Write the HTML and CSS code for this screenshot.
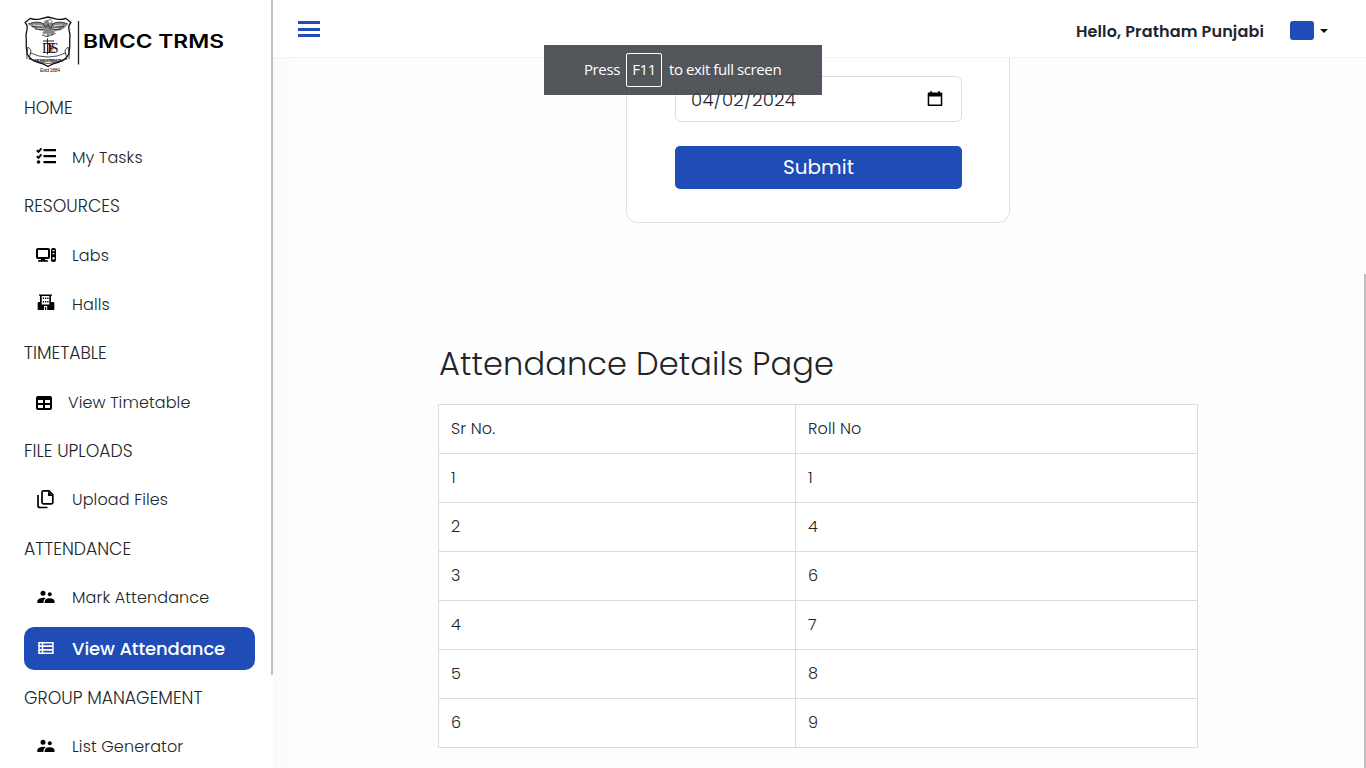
FILE: index.html
```html
<!DOCTYPE html>
<html lang="en">
<head>
<meta charset="utf-8">
<title>BMCC TRMS</title>
<link rel="stylesheet" href="styles.css">
</head>
<body>
<div class="app">
  <aside class="sidebar">
    <svg class="brand" width="204" height="64" viewBox="20 12 204 64">
      <path fill="none" stroke="#111" stroke-width="1.300" stroke-linejoin="round" d="M25 22.500l5.500-4.200q5 2 10 .5l7.500-1.800 7.500 1.800q6 1.500 10-.5l5.500 4.200q-3 3-2 7 1.500 5 .7 11 .6 7-1 13.500-2.500 5.500-9.500 8-7 1.500-11.200 4.500-4.200-3-11.200-4.500-7-2.500-9.500-8-1.600-6.500-1-13.500-.8-6 .7-11 1-4-2-7z"/>
      <path fill="none" stroke="#222" stroke-width=".8" d="M27 59q-1-7 1-12l3 3-.5 4M69 59q1-7-1-12l-3 3 .5 4M30.500 53q8 4 17.500 4t17.500-4l1.500 6q-9 4-19 4.500-10-.5-19-4.500z"/>
      <path fill="#888" d="M28 24q9-3.500 15-.5l2-3q3-1.500 6 0l2 3q7-3 15 .5-4 6-11 7l-3 .5 2 2.500-4 1.500-2-2-2.500 4-1-4-3 1-1-2.500 2-1q-9 0-16.500-7z"/>
      <path fill="none" stroke="#222" stroke-width=".8" d="M28 24q9-3.500 15-.5l3 4 2-3 2.500 5M68 24q-8-3.500-15-.5l-2 5M32 26.500l10 1M35 29l8 .5M64 26.500l-9 1M61 29l-7 .5M42 35l5 1.500 6-2"/>
      <path fill="none" stroke="#eee" stroke-width=".8" d="M33 25l9 .8M37 28l6 .5M62 25l-8 .8M59 28l-5 .5"/>
      <circle cx="50" cy="21.500" r="2" fill="#fff" stroke="#444" stroke-width=".6"/>
      <path fill="none" stroke="#222" stroke-width="1" d="M47.500 38.500v16M43 41h11"/>
      <text class="monogram" x="42" y="53">DES</text>
      <text class="motto" x="33" y="61.500" textLength="30">UNION IS STRENGTH</text>
      <text class="founded" x="40" y="71.500" textLength="20">Estd 1884</text>
      <path stroke="#222" stroke-width="1.300" d="M78.500 21v43.500"/>
      <text class="wordmark" x="83" y="48.200" textLength="141" lengthAdjust="spacingAndGlyphs">BMCC TRMS</text>
    </svg>
    <nav class="menu">
      <div class="group high"><span>HOME</span></div>
      <a class="item"><svg class="up2" width="20" height="18" viewBox="0 0 20 18"><path d="M.8 3.200l1.700 1.600L5.500 1.300M.8 9.200l1.700 1.600L5.500 7.300" fill="none" stroke="#000" stroke-width="1.900"/><circle cx="2.500" cy="15" r="1.800"/><path d="M7.500 2h12.500v2.200H7.500zM7.500 8h12.500v2.200H7.500zM7.500 14h12.500v2.200H7.500z"/></svg><span>My Tasks</span></a>
      <div class="group high"><span>RESOURCES</span></div>
      <a class="item"><svg class="up1" width="20" height="16" viewBox="0 0 20 16"><path fill-rule="evenodd" d="M2 1h10q2 0 2 2v7q0 2-2 2H9v1h2q1 0 1 1.800H2Q2 13 3 13h2v-1H2q-2 0-2-2V3q0-2 2-2zm0 2v7h10V3zM17 1h1q2 0 2 2v10q0 2-2 2h-1q-2 0-2-2V3q0-2 2-2zm-.5 2v1.200h2V3zm0 3v1.200h2V6zm1 4a1.300 1.300 0 1 0 .1 0z"/></svg><span>Labs</span></a>
      <a class="item"><svg class="up3" width="20" height="18" viewBox="0 0 20 18"><path fill-rule="evenodd" d="M3 1.500h13v1.300h-1V9H17q1.300 0 1.300 1v7H1.700v-7q0-1 1.300-1h1V2.800H3zM5.700 3v8.500h7.600V3zM8 17h1v-3h1.200v3h1V13H8z"/><path d="M6.800 4.500h1.300V6H6.800zM9 4.500h1.300V6H9zM11.200 4.500h1.300V6h-1.300zM6.800 8h1.300v1.500H6.800zM9 8h1.300v1.500H9zM11.200 8h1.300v1.500h-1.300z"/></svg><span>Halls</span></a>
      <div class="group high"><span>TIMETABLE</span></div>
      <a class="item"><svg width="16" height="16" viewBox="0 0 16 16"><path fill-rule="evenodd" d="M2 1h12q2 0 2 2v10q0 2-2 2H2q-2 0-2-2V3q0-2 2-2zm0 4v3h5V5zm7 0v3h5V5zm-7 5v3h5v-3zm7 0v3h5v-3z"/></svg><span>View Timetable</span></a>
      <div class="group short"><span>FILE UPLOADS</span></div>
      <a class="item"><svg class="up1" width="20" height="20" viewBox="0 0 20 20"><path d="M7.500 1.800H13l3.800 3.800v8q0 1.300-1.300 1.300h-8q-1.500 0-1.500-1.300V3.200q0-1.400 1.500-1.400zM2 6v10.500q0 2 2 2h7.500" fill="none" stroke="#000" stroke-width="1.700"/><path d="M12 2l5 5h-5z"/></svg><span>Upload Files</span></a>
      <div class="group"><span>ATTENDANCE</span></div>
      <a class="item"><svg class="up1" width="20" height="14" viewBox="0 0 20 14"><circle cx="7" cy="3.200" r="2.500"/><circle cx="13.800" cy="4.200" r="2"/><path d="M1.300 13v-2Q2 8 7.500 7.800q1.300 0 2.300.3Q7 10 7.200 13zM8.500 13q-.2-4.500 5-4.700 4.800.2 5 3V13z"/></svg><span>Mark Attendance</span></a>
      <a class="item active"><svg class="up1" width="20" height="14" viewBox="0 0 20 14"><path fill="#fff" fill-rule="evenodd" d="M2.200 1h15.500v12H2.200zm1.600 1.500v1.800h2V2.500zm3.500 0v1.800h8.900V2.500zM3.800 6v2h2V6zm3.500 0v2h8.900V6zM3.800 9.700v1.800h2V9.700zm3.500 0v1.800h8.900V9.700z"/></svg><span>View Attendance</span></a>
      <div class="group short"><span>GROUP MANAGEMENT</span></div>
      <a class="item"><svg class="up1" width="20" height="14" viewBox="0 0 20 14"><circle cx="7" cy="3.200" r="2.500"/><circle cx="13.800" cy="4.200" r="2"/><path d="M1.300 13v-2Q2 8 7.500 7.800q1.300 0 2.300.3Q7 10 7.200 13zM8.500 13q-.2-4.500 5-4.700 4.800.2 5 3V13z"/></svg><span>List Generator</span></a>
    </nav>
    <div class="side-scroll"></div>
  </aside>
  <div class="page">
    <header class="topbar">
      <div class="burger"><i></i><i></i><i></i></div>
      <div class="user"><span class="hello">Hello, Pratham Punjabi</span><span class="avatar"></span><span class="caret"></span></div>
    </header>
    <main class="content">
      <form class="card">
        <div class="date"><span>04/02/2024</span>
          <svg width="16" height="16" viewBox="0 0 16 16"><path fill-rule="evenodd" d="M1.500 1.500h1.800V0h1.400v1.500h6.600V0h1.400v1.500h1.800q.8 0 .8.8v11.900q0 .8-.8.8h-13q-.8 0-.8-.8V2.300q0-.8.800-.8zM2.200 5.500v8.100h11.600V5.500z"/></svg>
        </div>
        <button class="submit" type="button">Submit</button>
      </form>
      <section class="details">
        <h1>Attendance Details Page</h1>
        <table>
          <tr><td class="sr">Sr No.</td><td>Roll No</td></tr>
          <tr><td>1</td><td>1</td></tr>
          <tr><td>2</td><td>4</td></tr>
          <tr><td>3</td><td>6</td></tr>
          <tr><td>4</td><td>7</td></tr>
          <tr><td>5</td><td>8</td></tr>
          <tr><td>6</td><td>9</td></tr>
        </table>
      </section>
    </main>
  </div>
</div>
<div class="page-scroll"></div>
<div class="fullscreen-tip"><span class="press">Press</span><kbd>F11</kbd><span class="rest">to exit full screen</span></div>
</body>
</html>
```
FILE: styles.css
```css
* { box-sizing: border-box; }
body { margin: 0; height: 768px; overflow: hidden; background: #fefefe; color: #212529; font: 300 16px/24px Poppins, Inter, sans-serif; }
.app { display: flex; height: 768px; }
.sidebar { position: relative; z-index: 2; width: 273px; height: 768px; flex: none; overflow: hidden; padding: 12px 18px 0 20px; background: #fff; }
.page { flex: 1; min-width: 0; background: linear-gradient(90deg, #fafafa, #fefefe 24px); }
.brand { display: block; }
.monogram { font: 14px "Liberation Serif", serif; letter-spacing: -5px; fill: #111; }
.motto { font: bold 4px "Liberation Sans", sans-serif; fill: #111; }
.founded { font: 5px "Liberation Sans", sans-serif; fill: #111; }
.wordmark { font: 600 19px Inter, sans-serif; fill: #000; }
.menu { padding: 8px 0 0 4px; }
.group, .item { display: flex; align-items: center; height: 49px; white-space: nowrap; }
.group { font-size: 17.3px; line-height: 26px; }
.group.short { height: 48px; }
.group.high { padding-bottom: 1px; }
.item { padding-left: 12px; gap: 16px; color: #212529; letter-spacing: .12px; }
.item svg { flex: none; fill: #000; }
.up1 { margin-top: -2px; }
.up2 { margin-top: -4px; }
.up3 { margin-top: -5px; }
.item.active { height: 43px; margin: 5px 0 4px; border-radius: 10px; background: #1f4cb7; color: #fff; font-size: 18px; font-weight: 500; letter-spacing: -.1px; }
.side-scroll { position: absolute; top: 0; right: 0; width: 2px; height: 675px; background: #bfbfbf; }
.page-scroll { position: absolute; top: 274px; right: 0; width: 2px; height: 494px; background: #bfbfbf; }
.topbar { display: flex; justify-content: space-between; height: 57px; padding: 21px 38px 0 25px; background: #fff; box-shadow: 0 1px 1px #f4f4f4; position: relative; }
.burger { display: grid; gap: 3px; width: 22px; height: 17px; }
.burger i { background: #1f4cb7; height: 3px; }
.user { display: flex; align-items: flex-start; }
.hello { font-weight: 600; line-height: 22px; letter-spacing: .14px; white-space: nowrap; }
.avatar { width: 24px; height: 19px; margin-left: 26px; border-radius: 3px; background: #1f4cb7; }
.caret { margin: 8px 0 0 6px; border: 4px solid transparent; border-top-color: #111; border-bottom: 0; }
.content { padding-right: 3px; height: 711px; }
.card { width: 384px; height: 166px; margin: 0 auto; padding: 19px 47px 0 48px; border: 1px solid #dee2e6; border-top: 0; border-radius: 0 0 12px 12px; background: #fff; }
.date { display: flex; align-items: center; justify-content: space-between; height: 46px; padding: 2px 18px 0 15px; border: 1px solid #dadcde; border-radius: 6px; font-size: 18px; letter-spacing: .3px; }
.date svg { margin-top: -3px; }
.submit { display: block; width: 100%; height: 43px; margin-top: 24px; padding: 0 0 2px; border: 0; border-radius: 5px; background: #1f4cb7; color: #fff; font: 400 20px/24px Poppins, Inter, sans-serif; }
.details { width: 760px; margin: 122px auto 0; }
h1 { margin: 0 0 21px; padding-left: 1px; font-size: 32px; line-height: 38px; font-weight: 300; letter-spacing: .13px; white-space: nowrap; }
table { width: 760px; border-collapse: collapse; table-layout: fixed; background: #fff; }
td { height: 49px; padding: 0 12px; border: 1px solid #dcdcdc; letter-spacing: .12px; }
.sr { width: 357px; }
.fullscreen-tip { position: absolute; z-index: 5; left: 544px; top: 45px; display: flex; align-items: center; width: 278px; height: 50px; padding-left: 40px; background: rgba(64, 68, 73, .9); color: #fff; font: 400 15px/20px "Open Sans", sans-serif; letter-spacing: -.4px; white-space: nowrap; }
.press { width: 42px; padding-bottom: 2px; }
kbd { width: 36px; height: 34px; border: 1px solid #fff; border-radius: 2px; font: inherit; line-height: 30px; text-align: center; }
.rest { margin-left: 7px; padding-bottom: 2px; }
```
